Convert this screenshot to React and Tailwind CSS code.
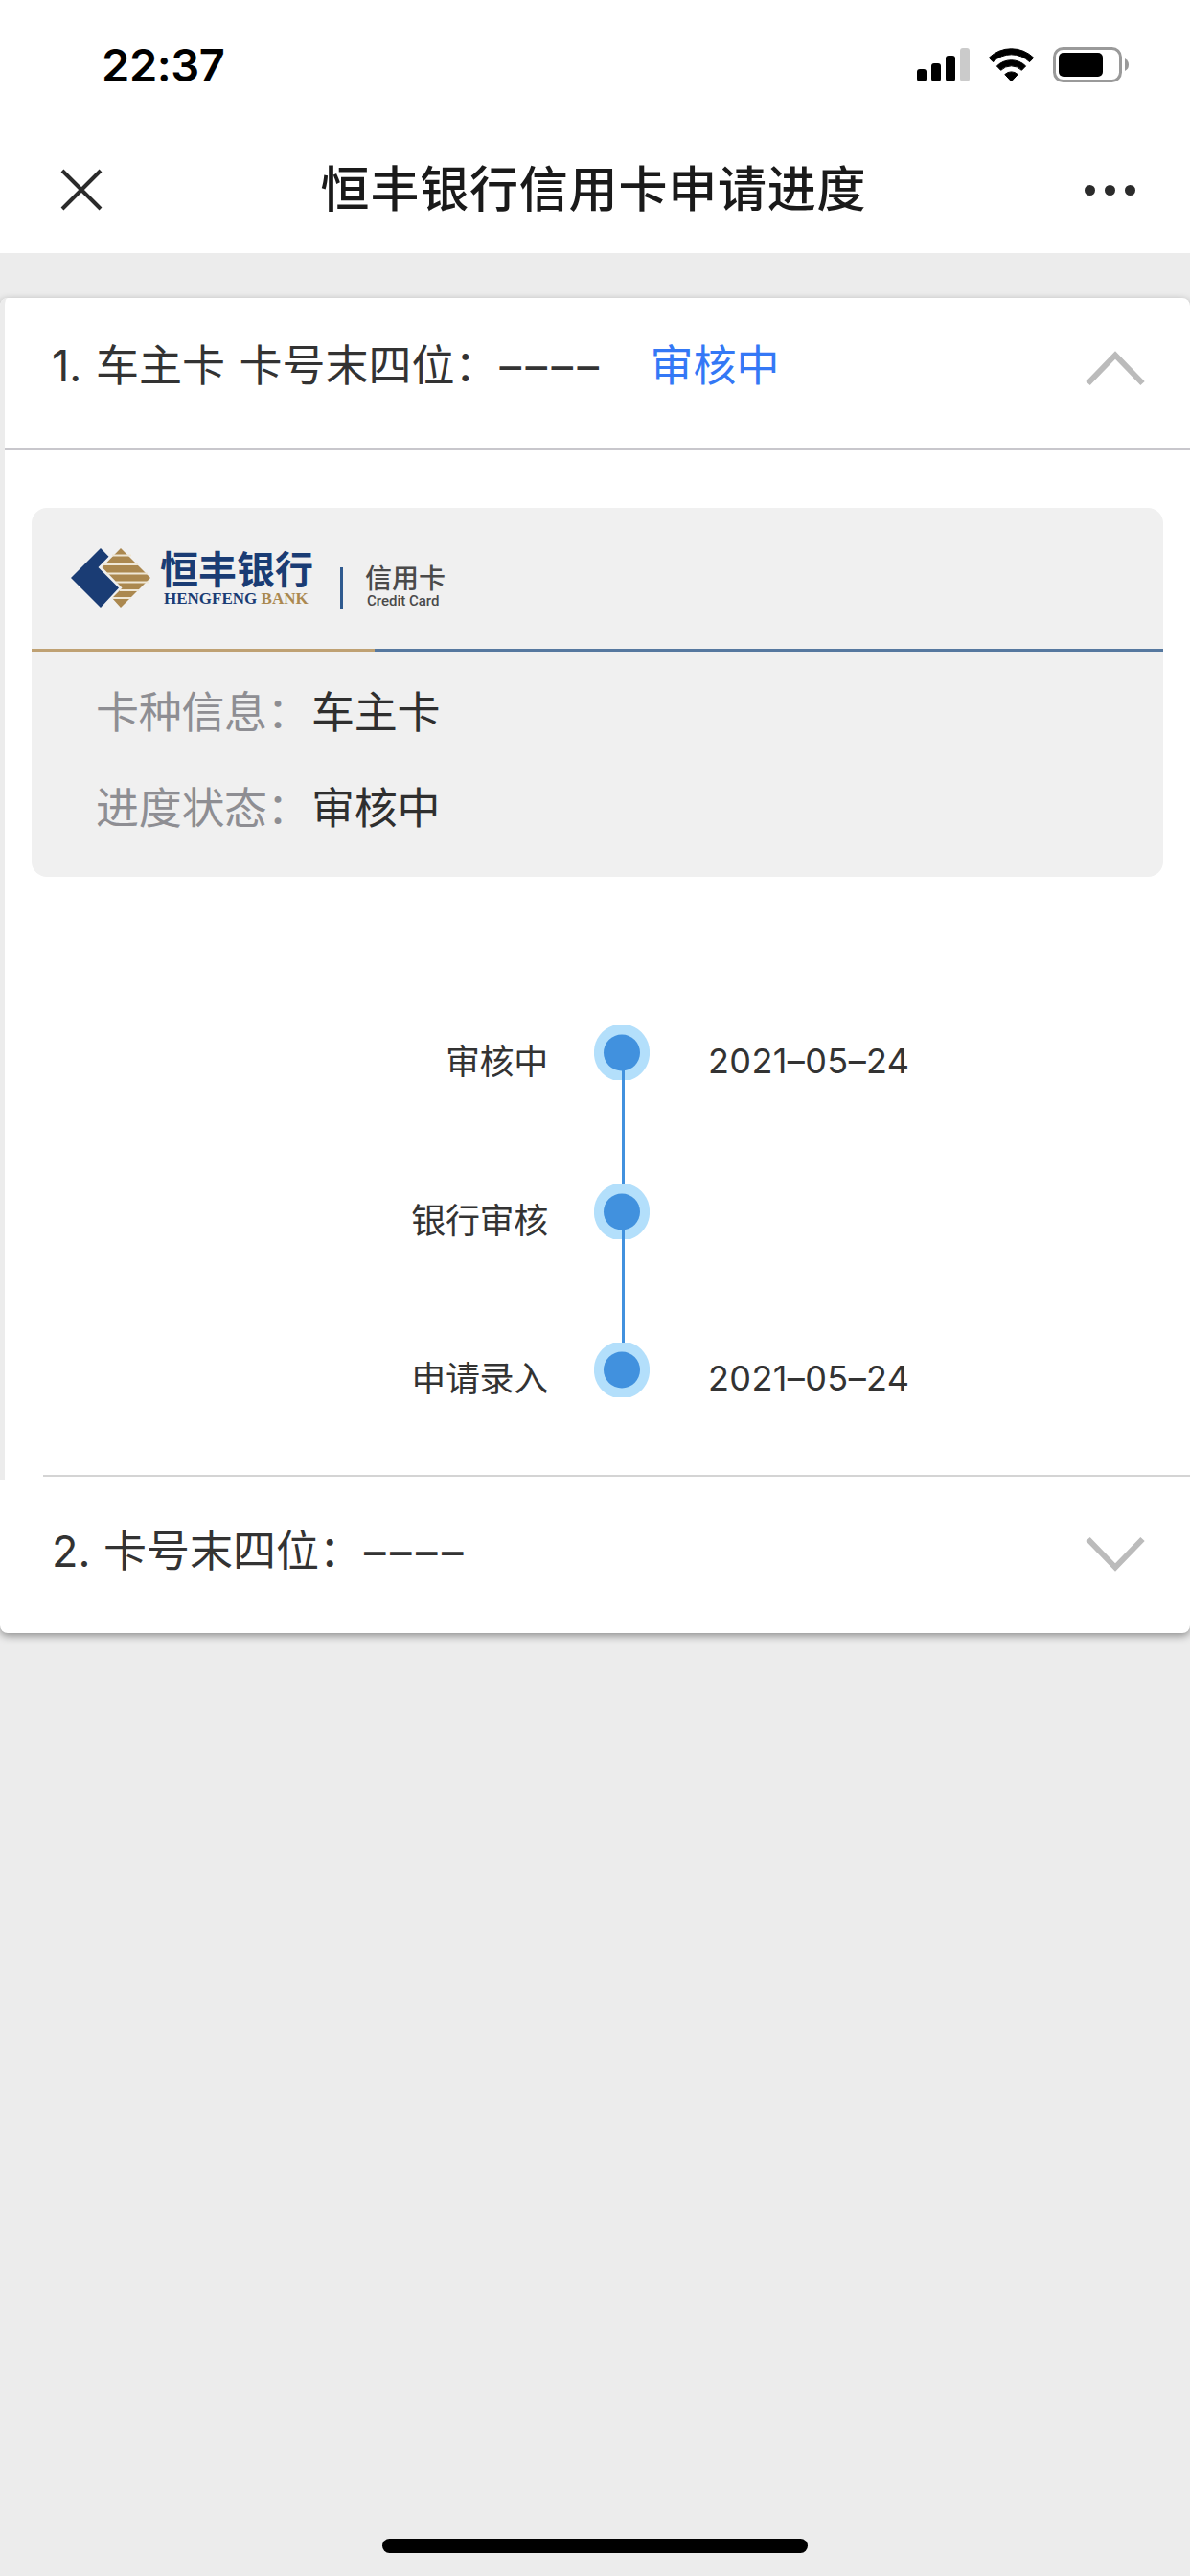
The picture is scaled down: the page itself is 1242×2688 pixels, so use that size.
import { useState } from "react";

const steps = [
  { label: "审核中", date: "2021–05–24" },
  { label: "银行审核", date: "" },
  { label: "申请录入", date: "2021–05–24" },
];

function StatusBar() {
  return (
    <div className="flex h-[132px] items-start justify-between pl-[106px] pr-[64px]">
      <span className="mt-[39px] text-[47px] leading-[58px] font-semibold tracking-[-0.4px] text-black">
        22:37
      </span>
      <svg className="mt-[49px] h-[37px] w-[222px]" viewBox="956 49 222 37">
        <rect x="957" y="72" width="10" height="13" rx="3" />
        <rect x="972" y="66" width="10" height="19" rx="3" />
        <rect x="987" y="58" width="10" height="27" rx="3" />
        <rect x="1002" y="50" width="10" height="35" rx="3" fill="#cbcbcb" />
        <path d="M1032.2 60.2a33.5 33.5 0 0 1 46.6 0l-4.2 4.4a27.4 27.4 0 0 0-38.2 0z" stroke="#000" />
        <path d="M1040.4 68.9a21.6 21.6 0 0 1 30.2 0l-4.2 4.4a15.5 15.5 0 0 0-21.8 0z" stroke="#000" />
        <path d="M1048.8 77.6a9.6 9.6 0 0 1 13.4 0l-6.7 7.2z" stroke="#000" />
        <rect x="1100.5" y="50.5" width="69" height="34" rx="9" fill="none" stroke="#9a9a9a" strokeWidth="3" />
        <rect x="1105" y="55" width="46" height="25" rx="5" />
        <path d="M1174 61q4 2 4 6.500t-4 6.500z" fill="#9a9a9a" />
      </svg>
    </div>
  );
}

function NavBar() {
  return (
    <div className="flex h-[132px] items-center justify-between pr-[57px] pl-[63px]">
      <svg className="h-[44px] w-[44px]" viewBox="0 0 44 44" fill="none" stroke="#2b2b2b" strokeWidth="4">
        <path d="M2 2l40 40M42 2L2 42" />
      </svg>
      <h1 className="text-[51px] leading-[64px] font-medium tracking-[0.8px] text-[#1a1a1a]">
        恒丰银行信用卡申请进度
      </h1>
      <div className="flex gap-[10px]">
        <i className="size-[11px] rounded-full bg-[#2b2b2b]" />
        <i className="size-[11px] rounded-full bg-[#2b2b2b]" />
        <i className="size-[11px] rounded-full bg-[#2b2b2b]" />
      </div>
    </div>
  );
}

function Chevron({ open }) {
  return (
    <svg className="h-[37px] w-[62px]" viewBox="0 0 62 37" fill="none" stroke="#bbbbbb" strokeWidth="6">
      {open ? <path d="M2.500 34L31 4.500L59.500 34" /> : <path d="M2.500 3L31 32.500L59.500 3" />}
    </svg>
  );
}

function BankLogo() {
  return (
    <div className="flex h-[147px] items-start pl-[41px] pt-[42px]">
      <svg className="h-[62px] w-[83px]" viewBox="0 0 83 62">
        <path d="M31 0L39.500 8.700L28.500 20L50 41.500L31 62L0 31z" fill="#1a3c74" />
        <path d="M52 0L83 31L52 62L43 52L53.500 41.500L32.500 20z" fill="#ab884f" />
        <path
          d="M43 7.500h20M34 17h36M37 26.500h43M47 35.500h34M51 44h20M43 52h20"
          stroke="#efe7d6"
          strokeWidth="2"
        />
      </svg>
      <div className="ml-[10px] w-[162px]">
        <div className="text-[40px] leading-[40px] font-bold whitespace-nowrap text-[#1a3c74] font-['Noto_Sans_CJK_SC',sans-serif]">
          恒丰银行
        </div>
        <div className="ml-[4px] mt-[4px] text-[17px] leading-[18px] font-bold whitespace-nowrap text-[#1a3c74] font-['Liberation_Serif',serif]">
          HENGFENG <span className="text-[#ab884f]">BANK</span>
        </div>
      </div>
      <div className="mt-[20px] ml-[26px] h-[43px] w-[3px] bg-[#2f5a8f]" />
      <div className="ml-[23px] mt-[17px] text-[#4a4a4a]">
        <div className="text-[28px] leading-[30px] font-medium whitespace-nowrap">信用卡</div>
        <div className="ml-[2px] text-[15px] leading-[16px] font-medium whitespace-nowrap font-['Roboto',sans-serif]">
          Credit Card
        </div>
      </div>
    </div>
  );
}

function InfoRow({ label, value }) {
  return (
    <div className="flex h-[100px] items-center text-[45px] leading-[60px] tracking-[-0.3px]">
      <span className="w-[225px] whitespace-nowrap text-[#8e8e93]">{label}：</span>
      <span className="text-[#2f2f2f]">{value}</span>
    </div>
  );
}

function Step({ label, date, last }) {
  return (
    <div className="flex h-[165.500px] items-start text-[36px] leading-[48px] text-[#333] last:h-[62px]">
      <span className="mt-[14px] w-[567px] text-right tracking-[-0.300px]">{label}</span>
      <svg className="ml-[48px] h-[166px] w-[58px] overflow-visible" viewBox="0 0 58 166">
        <path
          d="M20 0h18a29.500 29.500 0 0 1 20 26v5a29.500 29.500 0 0 1-20 26h-18a29.500 29.500 0 0 1-20-26v-5a29.500 29.500 0 0 1 20-26z"
          fill="#b3dffb"
        />
        <circle cx="29" cy="28.500" r="19" fill="#4191de" />
        {!last && <path d="M30.500 46V166" stroke="#4191de" strokeWidth="3" />}
      </svg>
      <span className="mt-[13px] ml-[61px] tracking-[0.4px]">{date}</span>
    </div>
  );
}

export default function App() {
  const [open, setOpen] = useState(true);

  return (
    <div className="flex h-[2688px] w-[1242px] flex-col overflow-hidden bg-[#ececec] font-['Inter','Noto_Sans_CJK_SC',sans-serif]">
      <header className="h-[264px] bg-white">
        <StatusBar />
        <NavBar />
      </header>

      <main className="mt-[47px] h-[1393px] rounded-[8px] bg-white shadow-[0_3px_8px_rgba(0,0,0,0.4)]">
        <section className="flex h-[1233px] flex-col rounded-tl-[8px] border-l-[5px] border-[#ececec]">
          <div
            className="flex h-[159px] shrink-0 items-start border-b-[3px] border-[#c8c7cc] pt-[41px] pr-[47px] pl-[49px] text-[45px] leading-[60px] text-[#333]"
            onClick={() => setOpen(!open)}
          >
            <span className="whitespace-nowrap [word-spacing:2px]">
              1. 车主卡 卡号末四位：<span className="ml-[2px] tracking-[4.5px]">––––</span>
            </span>
            <span className="ml-[49px] grow text-[#3478f6]">审核中</span>
            <div className="mt-[14px]">
              <Chevron open={open} />
            </div>
          </div>

          <div className="mt-[60px] mr-[28px] ml-[28px] h-[385px] shrink-0 rounded-[16px] bg-[#f0f0f0]">
            <BankLogo />
            <div className="flex h-[3px]">
              <div className="w-[358px] bg-[#bfa173]" />
              <div className="grow bg-[#56789f]" />
            </div>
            <div className="pt-[14px] pl-[67px]">
              <InfoRow label="卡种信息" value="车主卡" />
              <InfoRow label="进度状态" value="审核中" />
            </div>
          </div>

          <div className="mt-[155px] shrink-0">
            {steps.map((s, i) => (
              <Step key={i} label={s.label} date={s.date} last={i === steps.length - 1} />
            ))}
          </div>

          <div className="mt-auto mb-[3px] ml-[40px] h-[2px] shrink-0 bg-[#d4d4d4]" />
        </section>

        <section className="flex h-[160px] items-start pt-[45px] pr-[47px] pl-[54px] text-[45px] leading-[60px] text-[#333]">
          <span className="grow whitespace-nowrap [word-spacing:1px]">
            2. 卡号末四位：<span className="ml-[2px] tracking-[4.5px]">––––</span>
          </span>
          <div className="mt-[14px]">
            <Chevron open={false} />
          </div>
        </section>
      </main>

      <div className="mt-auto mb-[24px] h-[15px] w-[444px] self-center rounded-full bg-black" />
    </div>
  );
}
